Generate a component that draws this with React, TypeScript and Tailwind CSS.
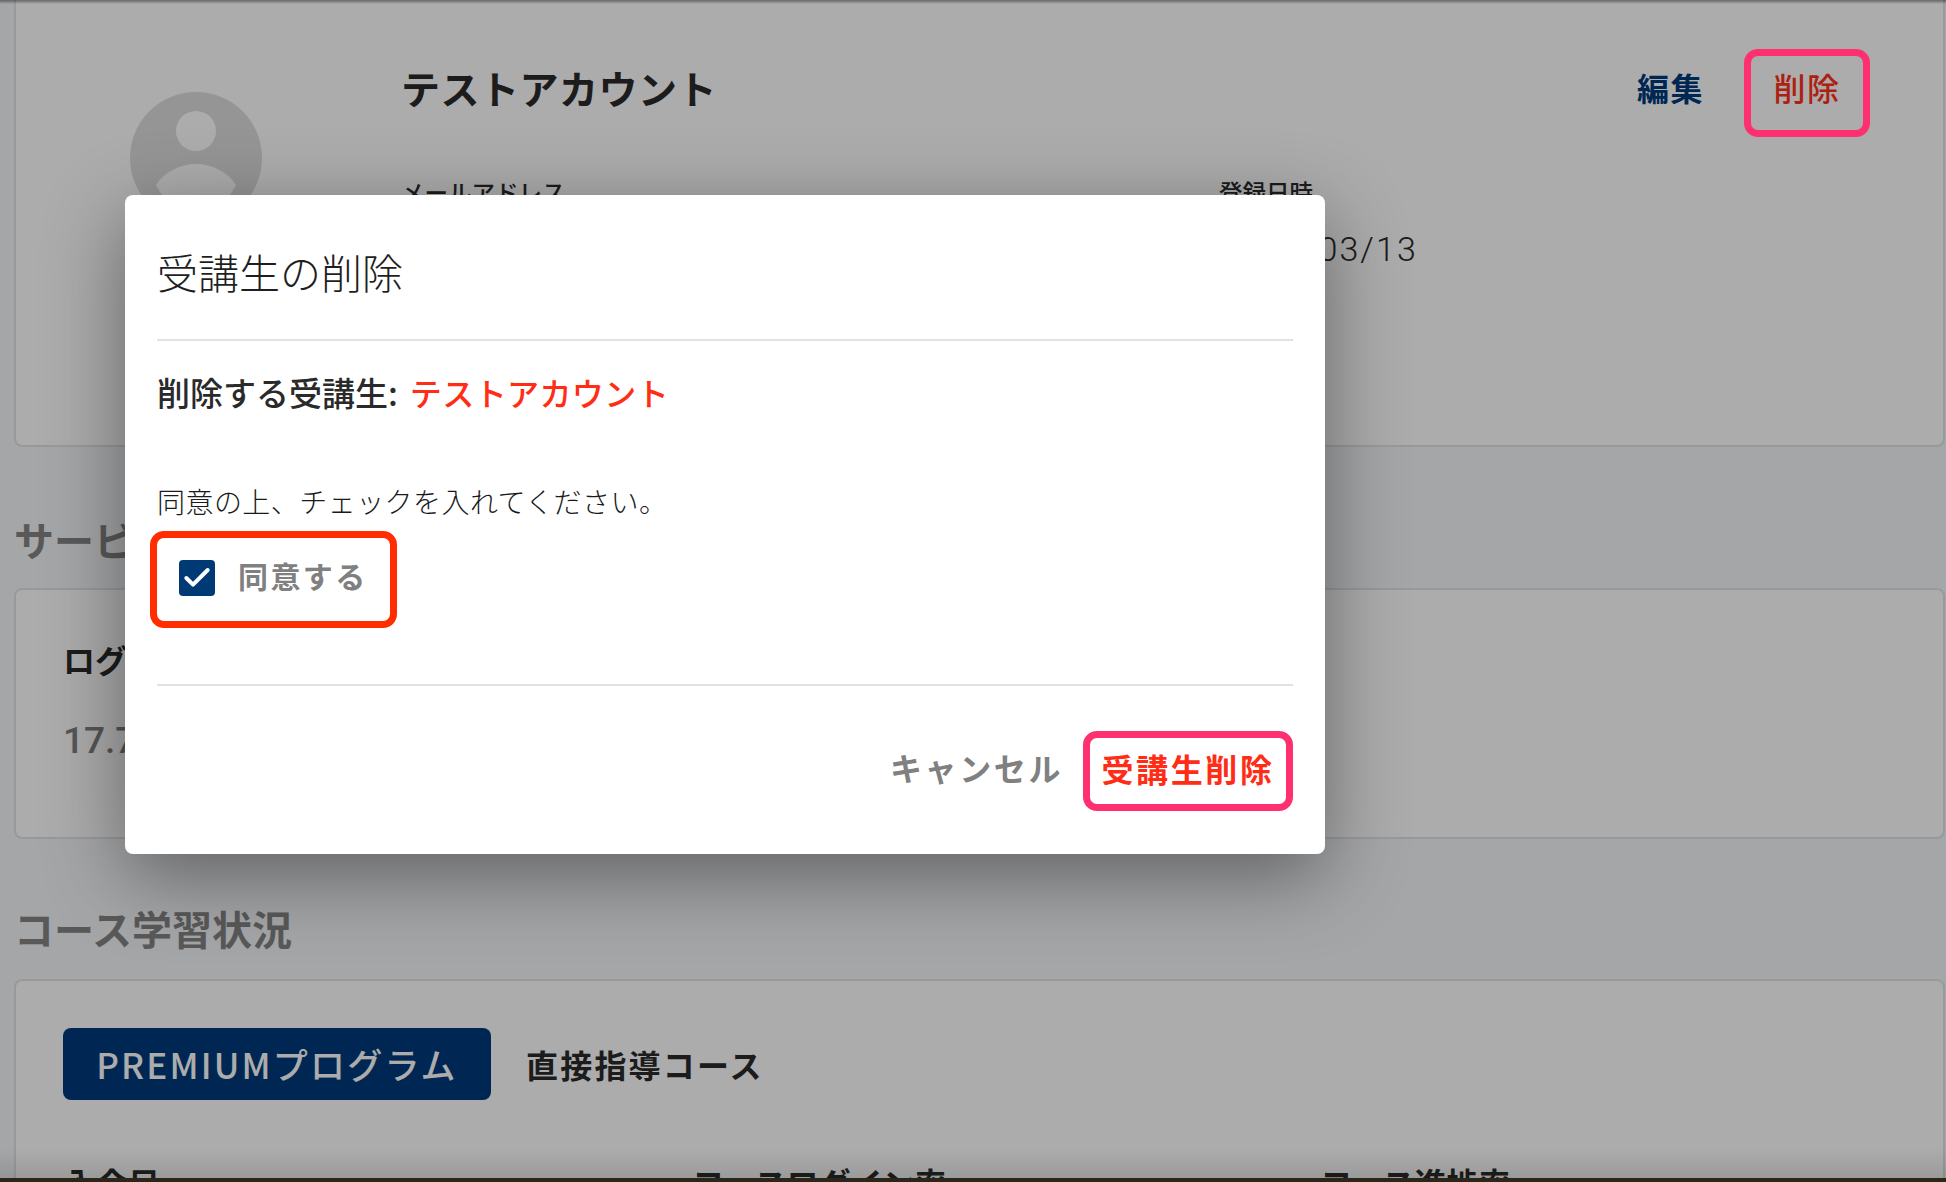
import { Check } from "lucide-react";

const jp = "font-['Noto_Sans_CJK_JP',sans-serif]";

function StudentCard() {
  return (
    <div className="-mt-[10px] flex h-[457px] shrink-0 rounded-lg border-2 border-[#e3e3e3] bg-white pl-[114px] pr-[73px]">
      {/* Avatar */}
      <div className="mt-[100px] h-[132px] w-[132px] shrink-0">
        <svg viewBox="0 0 132 132" className="h-full w-full">
          <circle cx="66" cy="66" r="66" fill="#dddddd" />
          <circle cx="66" cy="39" r="20" fill="#ffffff" />
          <path d="M26 93 C34 80 50 72 66 72 C82 72 98 80 106 93 C100 104 90 122 66 122 C42 122 32 104 26 93 Z" fill="#ffffff" />
        </svg>
      </div>

      {/* Details */}
      <div className="ml-[139px] mt-[71px] flex-1">
        <h1 className="text-[39px] font-bold leading-[48px] tracking-[0.5px] text-[#2a2a2a]">テストアカウント</h1>
        <div className="mt-[65px] grid w-[1000px] grid-cols-[818px_182px]">
          <div>
            <p className="text-[23.5px] font-medium leading-[32px] text-[#2a2a2a]">メールアドレス</p>
            <p className="mt-[21px] text-[32px] leading-[40px] text-[#2a2a2a]">test@example.com</p>
          </div>
          <div>
            <p className="text-[23.5px] font-medium leading-[32px] text-[#2a2a2a]">登録日時</p>
            <p className="mt-[21px] whitespace-nowrap font-['Roboto',sans-serif] text-[34px] font-light leading-[40px] tracking-[2.1px] text-[#2a2a2a]">2021/03/13</p>
          </div>
        </div>
      </div>

      {/* Actions */}
      <div className="mt-[57px] flex h-[88px] shrink-0 items-center">
        <button className="-mt-[12px] text-[32px] font-bold leading-[40px] tracking-[1.5px] text-[#003a7b]">編集</button>
        <button className="relative ml-[40px] flex h-[88px] w-[126px] items-center justify-center pb-[12px] text-[32px] font-medium leading-[40px] tracking-[1.5px] text-[#ff3218]">
          削除
          <span className="absolute inset-0 z-20 rounded-[14px] border-[7px] border-[#ff3070]" />
        </button>
      </div>
    </div>
  );
}

function ServiceSection() {
  return (
    <section>
      <h2 className="mt-[68px] text-[40px] font-bold leading-[48px] text-[#858585]">サービス利用状況</h2>
      <div className="mt-[25px] h-[251px] rounded-lg border-2 border-[#e3e3e3] bg-white px-[47px] pt-[47px]">
        <p className="text-[32px] font-bold leading-[44px] text-[#2a2a2a]">ログイン回数</p>
        <p className="mt-[38px] font-['Roboto',sans-serif] text-[37px] font-medium leading-[44px] text-[#808080]">17.7</p>
      </div>
    </section>
  );
}

function CourseSection() {
  return (
    <section>
      <h2 className="mt-[65px] text-[40px] font-bold leading-[48px] text-[#858585]">コース学習状況</h2>
      <div className="mt-[27px] h-[300px] rounded-lg border-2 border-[#e3e3e3] bg-white px-[47px] pt-[47px]">
        <div className="flex items-center">
          <span className="flex h-[72px] w-[428px] items-center justify-center rounded-lg bg-[#003a7b] text-[35px] font-medium tracking-[2.2px] text-white">
            PREMIUMプログラム
          </span>
          <span className="ml-[35px] text-[32px] font-bold tracking-[2.2px] text-[#2a2a2a]">直接指導コース</span>
        </div>
        <div className="mt-[60px] grid grid-cols-[628px_628px_1fr] pl-[1px] text-[32px] font-bold leading-[44px] text-[#2a2a2a]">
          <p>入会日</p>
          <p>コースログイン率</p>
          <p>コース進捗率</p>
        </div>
      </div>
    </section>
  );
}

function DeleteDialog() {
  return (
    <div className="absolute left-[125px] top-[195px] h-[659px] w-[1200px] rounded-lg bg-white px-[32px] shadow-[0_22px_80px_rgba(0,0,0,0.42)]">
      <h2 className="pt-[51px] text-[41px] font-light leading-[50px] text-[#1f1f1f]">受講生の削除</h2>
      <div className="mt-[43px] h-[2px] bg-[#e2e2e2]" />

      <p className="mt-[29px] text-[33px] font-medium leading-[44px] text-[#2a2a2a]">
        削除する受講生:
        <span className="ml-[12px] text-[32px] tracking-[0.4px] text-[#ff2d16]">テストアカウント</span>
      </p>

      <p className="mt-[67px] text-[28px] font-light leading-[40px] tracking-[0.45px] text-[#1a1a1a]">
        同意の上、チェックを入れてください。
      </p>

      {/* Checkbox */}
      <div className="relative ml-[22px] mt-[39px] flex h-[36px] w-fit items-center">
        <span className="flex h-[36px] w-[36px] items-center justify-center rounded-[4px] bg-[#003a75]">
          <Check className="h-[32px] w-[32px] text-white" strokeWidth={3} absoluteStrokeWidth />
        </span>
        <span className="ml-[23px] -translate-y-[3px] text-[30px] font-bold leading-[36px] tracking-[2.4px] text-[#808080]">同意する</span>
        <span className="absolute -left-[29px] -top-[29px] h-[97px] w-[247px] rounded-[14px] border-[7px] border-[#ff2d00]" />
      </div>

      <div className="mt-[88px] h-[2px] bg-[#e2e2e2]" />

      {/* Footer */}
      <div className="mt-[45px] flex items-center justify-end">
        <button className="-translate-y-[4px] text-[32px] font-bold leading-[44px] tracking-[2.6px] text-[#808080]">キャンセル</button>
        <button className="ml-[20px] flex h-[80px] w-[210px] items-center justify-center rounded-[14px] border-[7px] border-[#ff3070] pb-[7px] text-[32px] font-bold leading-[44px] tracking-[2.6px] text-[#ff2d16]">
          受講生削除
        </button>
      </div>
    </div>
  );
}

export default function App() {
  return (
    <div className={`relative h-[1182px] w-[1946px] overflow-hidden bg-[#f5f6f9] ${jp}`}>
      <div className="flex flex-col pl-[14px] pr-[1px]">
        <StudentCard />
        <ServiceSection />
        <CourseSection />
      </div>

      {/* Backdrop */}
      <div className="absolute inset-0 z-10 bg-black/[.325]" />
      <div className="absolute inset-x-0 top-0 z-10 h-[4px] bg-gradient-to-b from-black/40 to-transparent" />
      <div className="absolute inset-x-0 bottom-[4px] z-10 h-[30px] bg-gradient-to-t from-black/10 to-transparent" />
      <div className="absolute inset-x-0 bottom-0 z-10 h-[4px] bg-[#2a2618]" />

      <div className="absolute inset-0 z-20">
        <DeleteDialog />
      </div>
    </div>
  );
}
